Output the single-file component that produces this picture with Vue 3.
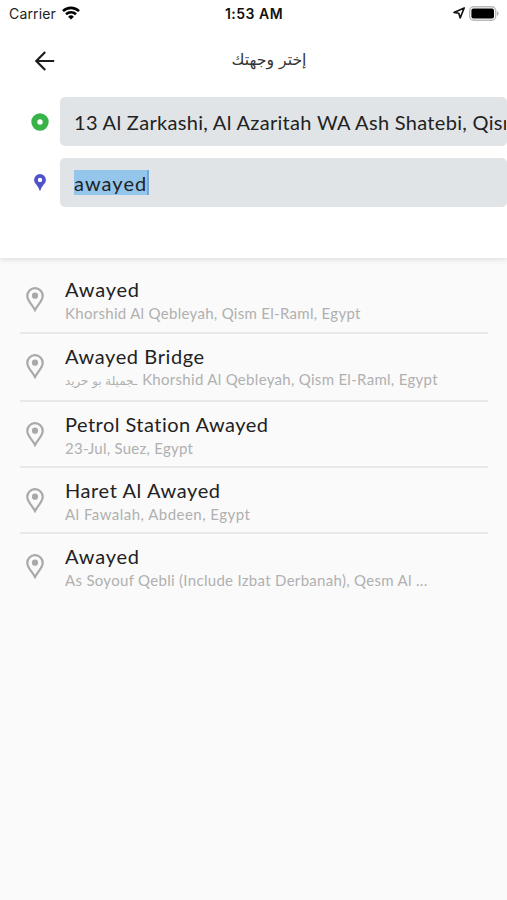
<script setup>
const results = [
  { title: 'Awayed', sub: 'Khorshid Al Qebleyah, Qism El-Raml, Egypt', size: 'first' },
  { title: 'Awayed Bridge', arabic: 'ـجميلة بو حريد', sub: 'Khorshid Al Qebleyah, Qism El-Raml, Egypt', size: 'tall' },
  { title: 'Petrol Station Awayed', sub: '23-Jul, Suez, Egypt', size: 'station' },
  { title: 'Haret Al Awayed', sub: 'Al Fawalah, Abdeen, Egypt', size: 'haret' },
  { title: 'Awayed', sub: 'As Soyouf Qebli (Include Izbat Derbanah), Qesm Al ...', size: 'last' },
]
</script>

<template>
  <div class="screen">
    <header class="panel">
      <div class="status">
        <div class="carrier">
          <span>Carrier</span>
          <svg width="18" height="14" viewBox="0 0 18 14">
            <g fill="none" stroke="#000" stroke-width="2.6">
              <path d="M1 5.1a11.5 11.5 0 0 1 16 0" />
              <path d="M4 8.3a7.2 7.2 0 0 1 10 0" />
            </g>
            <path d="M9 13.6 6.1 10.7a4.1 4.1 0 0 1 5.8 0z" />
          </svg>
        </div>
        <span class="time">1:53 AM</span>
        <div class="power">
          <svg width="12" height="12" viewBox="0 0 12 12">
            <path d="M11.2 .9 1 5.4l4.8.9L7.2 11z" fill="none" stroke="#111" stroke-width="1.6" stroke-linejoin="round" />
          </svg>
          <svg width="30" height="15" viewBox="0 0 30 15">
            <rect x=".7" y=".7" width="26" height="13.6" rx="4" fill="#fff" stroke="#b9b9b9" stroke-width="1.4" />
            <rect x="2.4" y="2.6" width="22.6" height="9.8" rx="2" />
            <path d="M28 5.2q1.6.6 1.6 2.3t-1.6 2.3z" fill="#b0b0b0" />
          </svg>
        </div>
      </div>

      <div class="nav">
        <svg class="back" width="20" height="20" viewBox="0 0 20 20">
          <path d="M10.2 1 1.3 10l8.9 9M1.6 10H19.2" fill="none" stroke="#1c1c1c" stroke-width="2.2" />
        </svg>
        <h1 dir="rtl">إختر وجهتك</h1>
      </div>

      <div class="row">
        <svg class="mark" width="18" height="18" viewBox="0 0 18 18">
          <circle cx="9" cy="9" r="5.7" fill="#fff" stroke="#37b34a" stroke-width="6" />
        </svg>
        <div class="field"><span class="origin">13 Al Zarkashi, Al Azaritah WA Ash Shatebi, Qism</span></div>
      </div>
      <div class="row">
        <svg class="mark" width="12" height="17" viewBox="0 0 12 17">
          <path fill="#4f52c8" fill-rule="evenodd" d="M6 .1A5.9 5.9 0 0 0 .1 6c0 3.8 4.4 5.5 5.3 10.3q.6.8 1.2 0C7.5 11.5 11.9 9.8 11.9 6A5.9 5.9 0 0 0 6 .1zM6 3.7a2.2 2.2 0 1 1 0 4.4 2.2 2.2 0 0 1 0-4.4z" />
        </svg>
        <div class="field"><span class="selected">awayed</span></div>
      </div>
    </header>

    <main class="results">
      <div v-for="(item, i) in results" :key="i" class="item" :class="item.size">
        <svg class="pin" width="18" height="25" viewBox="0 0 18 25">
          <path d="M9 1.2A7.6 7.6 0 0 0 1.3 9C1.3 14 6.3 17.5 9 23 11.7 17.5 16.7 14 16.7 9A7.6 7.6 0 0 0 9 1.2z" fill="none" stroke="#a9a9a9" stroke-width="2.2" />
          <circle cx="9" cy="8.7" r="3.1" fill="#a9a9a9" />
        </svg>
        <div class="copy">
          <div class="title">{{ item.title }}</div>
          <div class="sub"><bdi v-if="item.arabic" class="arabic">{{ item.arabic }}</bdi><span>{{ item.sub }}</span></div>
        </div>
      </div>
    </main>
  </div>
</template>

<style>
body { background: #fafafa; }
</style>

<style scoped>
.screen { width: 507px; height: 900px; overflow: hidden; background: #fafafa; font-family: Lato, "DejaVu Sans", sans-serif; }
.panel { box-sizing: border-box; height: 258px; background: #fff; box-shadow: 0 1px 6px rgba(0, 0, 0, .14); }
.status { display: grid; grid-template-columns: 1fr auto 1fr; align-items: center; height: 26px; padding: 0 8px 0 9px; font-family: Inter, sans-serif; font-size: 14px; color: #222; }
.carrier { display: flex; align-items: center; gap: 6px; letter-spacing: .15px; }
.time { font-weight: 600; color: #111; letter-spacing: .5px; }
.power { display: flex; align-items: center; justify-content: flex-end; gap: 4px; }
.nav { display: grid; grid-template-columns: 60px 1fr 60px; align-items: center; height: 69px; padding-bottom: 2px; }
.back { margin-left: 35px; }
h1 { margin: 0; text-align: center; font: 400 15.7px "DejaVu Sans", sans-serif; color: #333; padding: 0 0 3px 31px; }
.row { display: grid; grid-template-columns: 60px 1fr; align-items: center; height: 49px; margin-bottom: 12px; }
.mark { justify-self: center; margin-left: 20px; }
.field { display: flex; align-items: center; height: 49px; box-sizing: border-box; padding: 0 1px 0 14px; overflow: hidden; background: #e0e4e7; border-radius: 5px; white-space: nowrap; font-size: 20px; color: #222; }
.origin { letter-spacing: .31px; overflow: hidden; }
.selected { height: 25px; line-height: 26px; letter-spacing: 1.05px; background: #94c6ec; border-right: 2px solid #6fa9dc; }
.results { padding: 9px 19px 0 20px; }
.item { display: flex; box-sizing: border-box; height: 66px; padding: 10px 0 0 6px; border-bottom: 2px solid #e8e8e8; }
.first { height: 67px; }
.tall { height: 68px; }
.last { border: 0; }
.pin { margin: 10px 21px 0 0; flex: none; }
.copy { white-space: nowrap; }
.title { height: 24px; line-height: 25px; font-size: 20px; letter-spacing: .6px; color: #222; }
.sub { height: 24px; line-height: 24px; font-size: 15px; letter-spacing: .3px; color: #b0b0b0; }
.tall .sub { line-height: 23px; }
.station .title { letter-spacing: .47px; }
.station .sub { letter-spacing: .25px; }
.haret .sub { letter-spacing: .47px; }
.first .title, .last .title { letter-spacing: .8px; }
.arabic { display: inline-block; margin-right: 5px; font: 11.85px "DejaVu Sans", sans-serif; letter-spacing: 0; }
</style>
